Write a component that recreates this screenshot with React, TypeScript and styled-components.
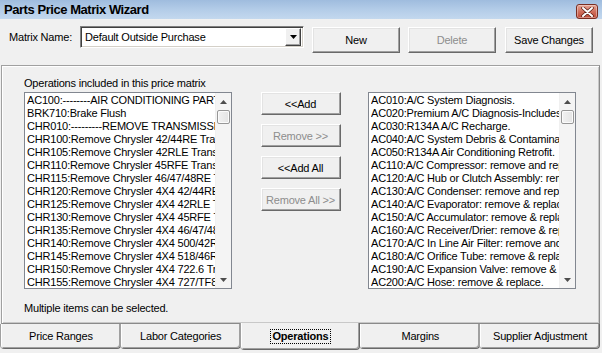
import React from 'react';
import styled, { createGlobalStyle } from 'styled-components';

const GlobalStyle = createGlobalStyle`
  html, body {
    margin: 0;
    padding: 0;
    background: #f0f0f0;
  }
  * {
    box-sizing: border-box;
  }
`;

const Window = styled.div`
  width: 602px;
  height: 353px;
  display: flex;
  flex-direction: column;
  background: #f0f0f0;
  font-family: 'Liberation Sans', Arial, sans-serif;
  font-size: 11px;
  letter-spacing: -0.2px;
  color: #000;
  overflow: hidden;
`;

const TitleBar = styled.div`
  height: 19px;
  flex: none;
  display: flex;
  align-items: center;
  justify-content: space-between;
  padding: 0 4px 0 4px;
  background: linear-gradient(to bottom, #9fbcde 0%, #b3cce8 50%, #c3d8ee 100%);
`;

const Title = styled.span`
  font-size: 13px;
  font-weight: bold;
  letter-spacing: -0.45px;
  color: #000;
`;

const CloseButton = styled.div`
  width: 22px;
  height: 15px;
  margin-top: 4px;
  border: 1px solid #7a2e22;
  border-radius: 3px;
  background: linear-gradient(to bottom, #e6a595 0%, #d0705e 50%, #c04a36 100%);
  display: flex;
  align-items: center;
  justify-content: center;
  box-shadow: inset 0 0 0 1px rgba(255, 255, 255, 0.35);
`;

const TopRow = styled.div`
  display: flex;
  align-items: flex-start;
  padding: 7px 0 0 9px;
  height: 46px;
  flex: none;
`;

const FieldLabel = styled.span`
  line-height: 22px;
  width: 71px;
`;

const Select = styled.div`
  width: 224px;
  height: 22px;
  background: #fff;
  border-top: 1px solid #808080;
  border-left: 1px solid #808080;
  border-right: 1px solid #fff;
  border-bottom: 1px solid #fff;
  box-shadow: inset 1px 1px 0 #404040, inset -1px -1px 0 #d4d0c8;
  display: flex;
  align-items: center;
  padding-left: 4px;
`;

const SelectText = styled.span`
  flex: 1;
`;

const DropButton = styled.div`
  width: 16px;
  height: 18px;
  margin-right: 2px;
  background: #f0f0f0;
  border-top: 1px solid #fff;
  border-left: 1px solid #fff;
  border-right: 1px solid #404040;
  border-bottom: 1px solid #404040;
  box-shadow: inset -1px -1px 0 #a0a0a0;
  display: flex;
  align-items: center;
  justify-content: center;
`;

const Button = styled.button<{ $w?: number; $h?: number; $ml?: number; $mt?: number }>`
  width: ${(p) => p.$w || 88}px;
  height: ${(p) => p.$h || 26}px;
  margin-left: ${(p) => p.$ml || 0}px;
  margin-top: ${(p) => p.$mt || 0}px;
  padding: 0;
  font-family: 'Liberation Sans', Arial, sans-serif;
  font-size: 11px;
  letter-spacing: -0.2px;
  white-space: nowrap;
  color: ${(p) => (p.disabled ? '#8d8d8d' : '#000')};
  background: #f0f0f0;
  border-top: 1px solid #fff;
  border-left: 1px solid #fff;
  border-right: 1px solid #696969;
  border-bottom: 1px solid #696969;
  box-shadow: inset -1px -1px 0 #a0a0a0, inset 1px 1px 0 #e3e3e3;
  border-radius: 0;
  outline: none;
`;

const TabPanel = styled.div`
  margin: 0 2px 0 1px;
  height: 259px;
  flex: none;
  border-top: 1px solid #a0a0a0;
  border-left: 1px solid #a0a0a0;
  border-right: 1px solid #8a8a8a;
  border-bottom: 1px solid #8a8a8a;
  box-shadow: inset 1px 1px 0 #fff, inset -1px -1px 0 #c8c8c8;
  padding: 11px 0 0 22px;
  display: flex;
  flex-direction: column;
`;

const Caption = styled.div`
  line-height: 13px;
  height: 13px;
  margin-bottom: 2px;
`;

const ListsRow = styled.div`
  display: flex;
  align-items: flex-start;
`;

const ListBox = styled.div`
  width: 208px;
  height: 197px;
  background: #fff;
  border: 1px solid #828790;
  display: flex;
`;

const Items = styled.div`
  flex: 1;
  overflow: hidden;
  padding: 1px 0 0 2px;
`;

const Item = styled.div`
  height: 13px;
  line-height: 13px;
  white-space: nowrap;
  overflow: hidden;
`;

const ScrollBar = styled.div`
  width: 16px;
  flex: none;
  background: #f4f4f4;
  display: flex;
  flex-direction: column;
  border-left: 1px solid #f0f0f0;
`;

const ScrollArrow = styled.div`
  height: 17px;
  display: flex;
  align-items: center;
  justify-content: center;
`;

const Track = styled.div`
  flex: 1;
  padding: 0 1px;
`;

const Thumb = styled.div`
  height: 14px;
  border: 1px solid #979797;
  border-radius: 2px;
  background: linear-gradient(to right, #f2f2f2, #e4e4e4);
  box-shadow: inset 0 0 0 1px #fbfbfb;
`;

const MiddleColumn = styled.div`
  width: 136px;
  display: flex;
  flex-direction: column;
  align-items: center;
  gap: 9px;
  padding-left: 1px;
`;

const Note = styled.div`
  margin-top: 13px;
  line-height: 13px;
`;

const TabStrip = styled.div`
  display: flex;
  margin: 0 2px 0 1px;
  height: 26px;
`;

const Tab = styled.div<{ $active?: boolean }>`
  flex: 1;
  height: ${(p) => (p.$active ? 27 : 25)}px;
  margin-top: ${(p) => (p.$active ? -1 : 0)}px;
  background: #f0f0f0;
  border-left: 1px solid #fff;
  border-right: 1px solid #696969;
  border-bottom: 1px solid #696969;
  border-radius: 0 0 4px 4px;
  box-shadow: inset -1px -1px 0 #a0a0a0, -1px 0 0 #a0a0a0;
  display: flex;
  align-items: center;
  justify-content: center;
  font-weight: ${(p) => (p.$active ? 'bold' : 'normal')};
  position: relative;
  z-index: ${(p) => (p.$active ? 1 : 0)};
`;

const FocusLabel = styled.span`
  outline: 1px dotted #000;
  outline-offset: 0;
  padding: 0 1px;
  line-height: 13px;
`;

const leftItems = [
  'AC100:--------AIR CONDITIONING PARTS',
  'BRK710:Brake Flush',
  'CHR010:---------REMOVE TRANSMISSION',
  'CHR100:Remove Chrysler 42/44RE Transmission',
  'CHR105:Remove Chrysler 42RLE Transmission',
  'CHR110:Remove Chrysler 45RFE Transmission',
  'CHR115:Remove Chrysler 46/47/48RE Transmission',
  'CHR120:Remove Chrysler 4X4 42/44RE Transmission',
  'CHR125:Remove Chrysler 4X4 42RLE Transmission',
  'CHR130:Remove Chrysler 4X4 45RFE Transmission',
  'CHR135:Remove Chrysler 4X4 46/47/48RE',
  'CHR140:Remove Chrysler 4X4 500/42RH',
  'CHR145:Remove Chrysler 4X4 518/46RH',
  'CHR150:Remove Chrysler 4X4 722.6 Transmission',
  'CHR155:Remove Chrysler 4X4 727/TF8',
];

const rightItems = [
  'AC010:A/C System Diagnosis.',
  'AC020:Premium A/C Diagnosis-Includes leak test',
  'AC030:R134A A/C Recharge.',
  'AC040:A/C System Debris & Contamination',
  'AC050:R134A Air Conditioning Retrofit.',
  'AC110:A/C Compressor: remove and replace.',
  'AC120:A/C Hub or Clutch Assembly: remove',
  'AC130:A/C Condenser: remove and replace.',
  'AC140:A/C Evaporator:  remove & replace.',
  'AC150:A/C Accumulator: remove & replace.',
  'AC160:A/C Receiver/Drier: remove & replace.',
  'AC170:A/C In Line Air Filter: remove and replace.',
  'AC180:A/C Orifice Tube: remove & replace.',
  'AC190:A/C Expansion Valve: remove & replace.',
  'AC200:A/C Hose: remove & replace.',
];

const tabs = ['Price Ranges', 'Labor Categories', 'Operations', 'Margins', 'Supplier Adjustment'];

const UpArrow = () => (
  <svg width="7" height="4" viewBox="0 0 7 4">
    <polygon points="0,4 7,4 3.5,0" fill="#4d4d4d" />
  </svg>
);

const DownArrow = ({ color = '#4d4d4d', w = 7 }: { color?: string; w?: number }) => (
  <svg width={w} height={w / 2 + 0.5} viewBox={`0 0 ${w} ${w / 2 + 0.5}`}>
    <polygon points={`0,0 ${w},0 ${w / 2},${w / 2 + 0.5}`} fill={color} />
  </svg>
);

const List = ({ items }: { items: string[] }) => (
  <ListBox>
    <Items>
      {items.map((t) => (
        <Item key={t}>{t}</Item>
      ))}
    </Items>
    <ScrollBar>
      <ScrollArrow>
        <UpArrow />
      </ScrollArrow>
      <Track>
        <Thumb />
      </Track>
      <ScrollArrow>
        <DownArrow />
      </ScrollArrow>
    </ScrollBar>
  </ListBox>
);

export default function App() {
  return (
    <>
      <GlobalStyle />
      <Window>
        <TitleBar>
          <Title>Parts Price Matrix Wizard</Title>
          <CloseButton>
            <svg width="13" height="10" viewBox="0 0 13 10">
              <path
                d="M2 1 L11 9 M11 1 L2 9"
                stroke="#5a1e14"
                strokeWidth="3.4"
                strokeLinecap="round"
              />
              <path
                d="M2 1 L11 9 M11 1 L2 9"
                stroke="#fff"
                strokeWidth="2"
                strokeLinecap="round"
              />
            </svg>
          </CloseButton>
        </TitleBar>

        <TopRow>
          <FieldLabel>Matrix Name:</FieldLabel>
          <Select>
            <SelectText>Default Outside Purchase</SelectText>
            <DropButton>
              <DownArrow color="#000" w={7} />
            </DropButton>
          </Select>
          <Button $ml={8} $mt={1}>New</Button>
          <Button $ml={8} $mt={1} disabled>
            Delete
          </Button>
          <Button $ml={9} $mt={1}>Save Changes</Button>
        </TopRow>

        <TabPanel>
          <Caption>Operations included in this price matrix</Caption>
          <ListsRow>
            <List items={leftItems} />
            <MiddleColumn>
              <Button $w={80} $h={23}>&lt;&lt;Add</Button>
              <Button $w={80} $h={23} disabled>
                Remove &gt;&gt;
              </Button>
              <Button $w={80} $h={23}>&lt;&lt;Add All</Button>
              <Button $w={80} $h={23} disabled>
                Remove All &gt;&gt;
              </Button>
            </MiddleColumn>
            <List items={rightItems} />
          </ListsRow>
          <Note>Multiple items can be selected.</Note>
        </TabPanel>

        <TabStrip>
          {tabs.map((t) => (
            <Tab key={t} $active={t === 'Operations'}>
              {t === 'Operations' ? <FocusLabel>{t}</FocusLabel> : t}
            </Tab>
          ))}
        </TabStrip>
      </Window>
    </>
  );
}
